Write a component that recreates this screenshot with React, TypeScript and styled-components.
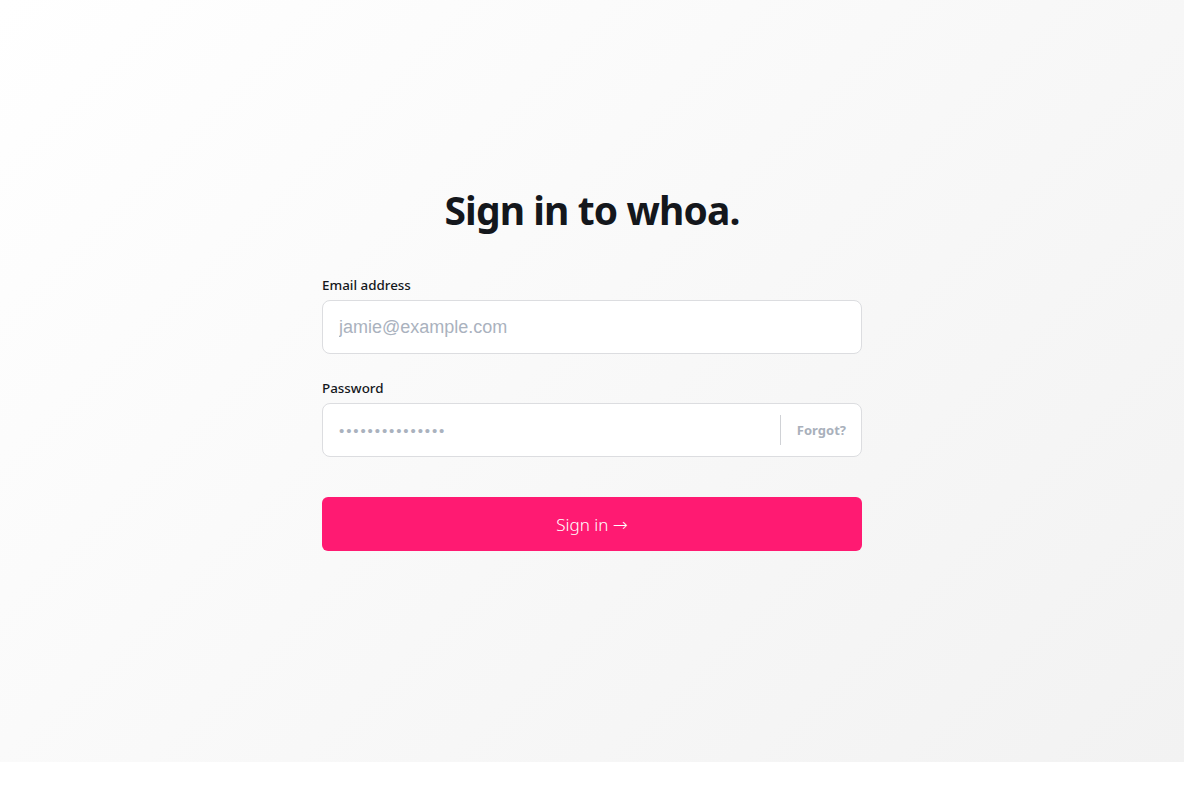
import React from "react";
import styled, { createGlobalStyle } from "styled-components";

const Global = createGlobalStyle`
  html, body { margin: 0; padding: 0; background: #ffffff; }
  body { font-family: "Noto Sans", "Open Sans", sans-serif; }
  * { box-sizing: border-box; }
`;

const Page = styled.main`
  height: 762px;
  background: linear-gradient(135deg, #ffffff 0%, #f2f2f2 100%);
  display: flex;
  flex-direction: column;
  align-items: center;
  padding-top: 184px;
`;

const Title = styled.h1`
  margin: 0 0 40px;
  font-size: 39px;
  line-height: 52px;
  font-weight: 700;
  color: #14171c;
  letter-spacing: -0.9px;
`;

const Form = styled.form`
  width: 540px;
  display: flex;
  flex-direction: column;
`;

const Field = styled.div<{ $mb: number }>`
  display: flex;
  flex-direction: column;
  margin-bottom: ${(p) => p.$mb}px;
`;

const Label = styled.label`
  font-size: 13.4px;
  line-height: 19px;
  font-weight: 500;
  color: #14171c;
  margin-bottom: 5px;
`;

const InputBox = styled.div`
  height: 54px;
  background: #ffffff;
  border: 1px solid #dcdde0;
  border-radius: 8px;
  display: flex;
  align-items: center;
`;

const Input = styled.input`
  flex: 1;
  height: 100%;
  border: none;
  outline: none;
  background: transparent;
  padding: 0 16px;
  font-family: "Liberation Sans", Arial, sans-serif;
  font-size: 18px;
  color: #14171c;
  &::placeholder { color: #aab2be; }
`;

const Dots = styled.span`
  flex: 1;
  padding: 0 16px;
  color: #aab2be;
  font-family: "Liberation Sans", Arial, sans-serif;
  font-size: 15px;
  letter-spacing: 1.9px;
`;

const Divider = styled.span`
  width: 1px;
  height: 30px;
  background: #d0d2d6;
`;

const Forgot = styled.a`
  padding: 0 15px 0 16px;
  font-size: 13px;
  font-weight: 700;
  color: #a9b0bb;
  text-decoration: none;
`;

const Button = styled.button`
  height: 54px;
  border: none;
  border-radius: 6px;
  background: #ff1a72;
  color: #ffffff;
  font-family: "Noto Sans", "Open Sans", sans-serif;
  font-size: 17px;
  font-weight: 300;
  cursor: pointer;
`;

const Arrow = styled.span`
  font-family: "DejaVu Sans", sans-serif;
  font-size: 18px;
`;

export default function App() {
  return (
    <>
      <Global />
      <Page>
        <Title>Sign in to whoa.</Title>
        <Form onSubmit={(e) => e.preventDefault()}>
          <Field $mb={25}>
            <Label>Email address</Label>
            <InputBox>
              <Input type="email" placeholder="jamie@example.com" />
            </InputBox>
          </Field>
          <Field $mb={40}>
            <Label>Password</Label>
            <InputBox>
              <Dots>•••••••••••••••</Dots>
              <Divider />
              <Forgot href="#">Forgot?</Forgot>
            </InputBox>
          </Field>
          <Button type="submit">
            Sign in <Arrow>→</Arrow>
          </Button>
        </Form>
      </Page>
    </>
  );
}
